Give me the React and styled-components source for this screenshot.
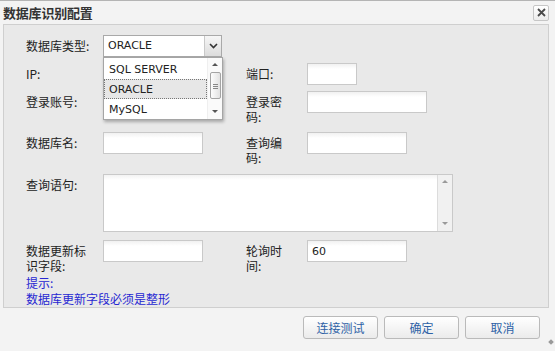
import React from 'react'
import styled, { createGlobalStyle } from 'styled-components'

const GlobalStyle = createGlobalStyle`
  html, body {
    margin: 0;
    padding: 0;
    background: #f3f3f3;
  }
  body {
    font-family: "Noto Sans CJK SC", "DejaVu Sans", sans-serif;
    font-size: 12px;
    color: #222;
  }
`

const LATIN = `"DejaVu Sans", "Noto Sans CJK SC", sans-serif`

const App = () => {
  return (
    <Window>
      <GlobalStyle />

      <TitleBar>
        <Title>数据库识别配置</Title>
        <CloseButton>
          <svg width="9" height="9" viewBox="0 0 9 9">
            <path d="M1 1 L8 8 M8 1 L1 8" stroke="#4a4a4a" strokeWidth="1.8" />
          </svg>
        </CloseButton>
      </TitleBar>

      <Panel>
        <Row $gap={6}>
          <Label>数据库类型:</Label>
          <SelectWrap>
            <SelectBox>
              <SelectValue>ORACLE</SelectValue>
              <SelectArrow>
                <svg width="9" height="6" viewBox="0 0 9 6">
                  <path d="M1 1 L4.5 4.5 L8 1" fill="none" stroke="#333" strokeWidth="1.6" />
                </svg>
              </SelectArrow>
            </SelectBox>

            <DropList>
              <Options>
                <Option>SQL SERVER</Option>
                <Option $active>ORACLE</Option>
                <Option>MySQL</Option>
              </Options>
              <Scrollbar $dark>
                <ArrowUp $dark />
                <Thumb>
                  <svg width="5" height="6" viewBox="0 0 5 6">
                    <path d="M0 1.5 H5 M0 3.5 H5 M0 5.5 H5" stroke="#888" strokeWidth="1" />
                  </svg>
                </Thumb>
                <Spacer />
                <ArrowDown $dark />
              </Scrollbar>
            </DropList>
          </SelectWrap>
        </Row>

        <Row $gap={6}>
          <Label>IP:</Label>
          <div />
          <Label $w={44}>端口:</Label>
          <Input $w={50} />
        </Row>

        <Row $gap={8}>
          <Label>登录账号:</Label>
          <div />
          <Label $w={44}>登录密码:</Label>
          <Input $w={120} />
        </Row>

        <Row $gap={9}>
          <Label>数据库名:</Label>
          <Input $w={100} />
          <Label $w={44}>查询编码:</Label>
          <Input $w={100} />
        </Row>

        <Row $gap={8}>
          <Label>查询语句:</Label>
          <TextBox>
            <TextInput />
            <Scrollbar>
              <ArrowUp />
              <Spacer />
              <ArrowDown />
            </Scrollbar>
          </TextBox>
        </Row>

        <Row $gap={0}>
          <Label>数据更新标识字段:</Label>
          <Input $w={100} />
          <Label $w={44}>轮询时间:</Label>
          <Input $w={100} defaultValue="60" />
        </Row>

        <Hint>{'提示:\n数据库更新字段必须是整形'}</Hint>
      </Panel>

      <Footer>
        <Button>连接测试</Button>
        <Button>确定</Button>
        <Button>取消</Button>
      </Footer>

      <ResizeGrip />
    </Window>
  )
}

export default App

const Window = styled.div`
  position: relative;
  width: 555px;
  height: 351px;
  box-sizing: border-box;
  background: #f3f3f3;
  border-top: 1px solid #b4b4b4;
  display: flex;
  flex-direction: column;
  overflow: hidden;
`

const TitleBar = styled.div`
  height: 23px;
  display: flex;
  align-items: center;
  justify-content: space-between;
  padding: 0 6px 0 3px;
`

const Title = styled.div`
  font-size: 13px;
  font-weight: bold;
  color: #333;
  letter-spacing: -0.2px;
`

const CloseButton = styled.div`
  width: 16px;
  height: 16px;
  box-sizing: border-box;
  border: 1px solid #c6c6c6;
  border-radius: 2px;
  background: linear-gradient(#ffffff, #ececec);
  display: flex;
  align-items: center;
  justify-content: center;
`

const Panel = styled.div`
  margin-left: 3px;
  width: 546px;
  box-sizing: border-box;
  border: 1px solid #cfcfcf;
  background: #e9e9e9;
  padding: 10px 0 0 22px;
`

const Row = styled.div`
  display: grid;
  grid-template-columns: 77px 143px 61px 1fr;
  align-items: start;
  margin-bottom: ${p => p.$gap}px;
`

const Label = styled.div`
  width: ${p => p.$w || 68}px;
  padding-top: 3px;
  line-height: 15px;
  font-size: 12px;
  color: #222;
`

const SelectWrap = styled.div`
  position: relative;
  width: 119px;
`

const SelectBox = styled.div`
  width: 119px;
  height: 22px;
  box-sizing: border-box;
  border: 1px solid #a9a9a9;
  background: #fff;
  display: flex;
`

const SelectValue = styled.div`
  flex: 1;
  padding-left: 4px;
  line-height: 20px;
  font-family: ${LATIN};
  font-size: 11px;
  color: #222;
`

const SelectArrow = styled.div`
  width: 16px;
  border-left: 1px solid #c9c9c9;
  background: linear-gradient(#f6f6f6, #dcdcdc);
  display: flex;
  align-items: center;
  justify-content: center;
`

const DropList = styled.div`
  position: absolute;
  top: 22px;
  left: 0;
  width: 120px;
  height: 63px;
  box-sizing: border-box;
  border: 1px solid #a5a5a5;
  background: #fff;
  box-shadow: 1px 2px 3px rgba(0, 0, 0, 0.28);
  display: flex;
  z-index: 5;
`

const Options = styled.div`
  flex: 1;
  padding-top: 1px;
`

const Option = styled.div`
  height: 20px;
  box-sizing: border-box;
  padding-left: 4px;
  line-height: 19px;
  font-family: ${LATIN};
  font-size: 11px;
  color: #222;
  background: ${p => (p.$active ? '#e7e7e7' : 'transparent')};
  border: 1px dotted ${p => (p.$active ? '#777' : 'transparent')};
`

const Scrollbar = styled.div`
  width: 15px;
  box-sizing: border-box;
  background: ${p => (p.$dark ? '#fafafa' : '#f1f1f1')};
  border-left: 1px solid ${p => (p.$dark ? '#efefef' : '#dcdcdc')};
  display: flex;
  flex-direction: column;
  align-items: center;
  padding: 5px 0 6px;
`

const ArrowUp = styled.div`
  width: 0;
  height: 0;
  border-left: 3px solid transparent;
  border-right: 3px solid transparent;
  border-bottom: 3px solid ${p => (p.$dark ? '#555' : '#9a9a9a')};
`

const ArrowDown = styled.div`
  width: 0;
  height: 0;
  border-left: 3px solid transparent;
  border-right: 3px solid transparent;
  border-top: 3px solid ${p => (p.$dark ? '#555' : '#9a9a9a')};
`

const Thumb = styled.div`
  margin-top: 6px;
  width: 11px;
  height: 27px;
  box-sizing: border-box;
  border: 1px solid #a4a4a4;
  border-radius: 2px;
  background: linear-gradient(90deg, #fdfdfd, #e2e2e2);
  display: flex;
  align-items: center;
  justify-content: center;
`

const Spacer = styled.div`
  flex: 1;
`

const Input = styled.input`
  width: ${p => p.$w}px;
  height: 22px;
  box-sizing: border-box;
  border: 1px solid #c9c9c9;
  background: linear-gradient(#f1f1f1, #ffffff 5px);
  padding: 0 4px;
  font-family: ${LATIN};
  font-size: 11px;
  color: #222;
  outline: none;
`

const TextBox = styled.div`
  grid-column: 2 / span 3;
  width: 350px;
  height: 58px;
  box-sizing: border-box;
  border: 1px solid #c9c9c9;
  background: linear-gradient(#f3f3f3, #ffffff 5px);
  display: flex;
`

const TextInput = styled.textarea`
  flex: 1;
  border: none;
  background: transparent;
  resize: none;
  outline: none;
  overflow: hidden;
`

const Hint = styled.div`
  margin-top: 2px;
  font-size: 12px;
  line-height: 16px;
  white-space: pre-line;
  color: #2727d2;
`

const Footer = styled.div`
  display: flex;
  justify-content: flex-end;
  gap: 6px;
  padding: 8px 15px 0 0;
`

const Button = styled.button`
  width: 75px;
  height: 23px;
  box-sizing: border-box;
  border: 1px solid #bababa;
  border-radius: 3px;
  background: linear-gradient(#ffffff, #ebebeb);
  color: #2e62a6;
  font-family: "Noto Sans CJK SC", sans-serif;
  font-size: 12px;
  padding: 0;
  cursor: pointer;
`

const ResizeGrip = styled.div`
  position: absolute;
  right: 2px;
  bottom: 7px;
  width: 4px;
  height: 4px;
  background: #9a9a9a;
  transform: rotate(45deg);
`
